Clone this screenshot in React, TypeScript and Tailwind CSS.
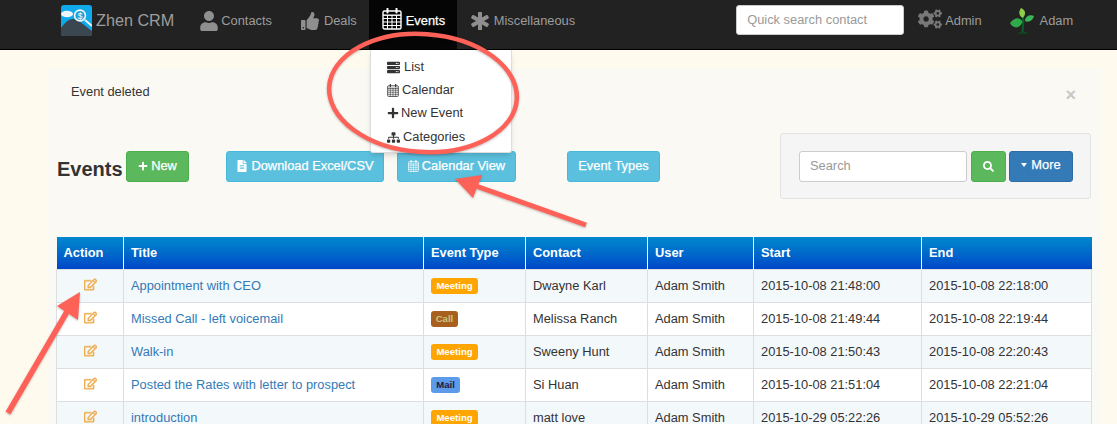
import React from "react";
import { FaUser, FaThumbsUp, FaAsterisk, FaCogs, FaServer, FaPlus, FaSitemap, FaRegEdit, FaSearch, FaFileAlt } from "react-icons/fa";

function Cal({ className, stroke = "currentColor" }: { className?: string; stroke?: string }) {
  return (
    <svg viewBox="0 0 20 22" className={className} fill="none" stroke={stroke}>
      <rect x="1" y="3" width="18" height="18" rx="1.5" strokeWidth="1.4" />
      <path d="M1 7.2H19" strokeWidth="1.4" />
      <path d="M1 10.5H19M1 14H19M1 17.5H19M5.5 7V21M10 7V21M14.5 7V21" strokeWidth="1" />
      <path d="M5.5 0.8V4.5M14.5 0.8V4.5" strokeWidth="2" strokeLinecap="round" />
    </svg>
  );
}

function Logo() {
  return (
    <svg viewBox="0 0 31 31" className="w-[31px] h-[31px] shrink-0">
      <rect width="31" height="31" rx="3" fill="#10a9ec" />
      <path d="M0 28V23C3 19 6 15 11 14C16 13 22 19 31 26V28A3 3 0 0 1 28 31H3A3 3 0 0 1 0 28Z" fill="#3a4650" />
      <ellipse cx="6" cy="9" rx="6" ry="3.2" fill="#eef6fa" />
      <circle cx="19" cy="10.5" r="6.2" fill="#f2f9fc" />
      <circle cx="19" cy="10.5" r="4.6" fill="#1c9fd8" />
      <text x="19" y="13.5" fontSize="8.5" fill="#fff" textAnchor="middle" fontFamily="Liberation Sans">$</text>
      <path d="M24 15L31 21" stroke="#eef6fa" strokeWidth="2" />
    </svg>
  );
}

function Plant() {
  return (
    <svg viewBox="0 0 24 26" className="w-[24px] h-[26px] shrink-0">
      <path d="M13 8C13.5 13 13 19 12.5 24" stroke="#0b5a2a" strokeWidth="2.2" fill="none" />
      <path d="M8.5 25H17" stroke="#0b4a22" strokeWidth="1.6" />
      <path d="M12.5 10C8 7 9 3 11 0C15 1.5 17 6 12.5 10Z" fill="#8ccf4a" />
      <path d="M12.5 14C10 9 5 9 0 15C3 21 10 21 12.5 14Z" fill="#2faa4a" />
      <path d="M15 13C15 9 19 6 24 8C23 12 19 15 15 13Z" fill="#3cb558" />
    </svg>
  );
}

const rows = [
  ["Appointment with CEO", "Meeting", "Dwayne Karl", "2015-10-08 21:48:00", "2015-10-08 22:18:00"],
  ["Missed Call - left voicemail", "Call", "Melissa Ranch", "2015-10-08 21:49:44", "2015-10-08 22:19:44"],
  ["Walk-in", "Meeting", "Sweeny Hunt", "2015-10-08 21:50:43", "2015-10-08 22:20:43"],
  ["Posted the Rates with letter to prospect", "Mail", "Si Huan", "2015-10-08 21:51:04", "2015-10-08 22:21:04"],
  ["introduction", "Meeting", "matt love", "2015-10-29 05:22:26", "2015-10-29 05:52:26"],
];

function Badge({ t }: { t: string }) {
  const c =
    t === "Meeting"
      ? "bg-[#ffa500] text-white w-[47px]"
      : t === "Call"
        ? "bg-[#a8601f] text-[#c9c77f] w-[27px]"
        : "bg-[#5b9bea] text-[#2a1838] w-[29px]";
  return (
    <span className={`inline-flex items-center justify-center h-[16px] rounded-[3px] text-[9.6px] font-bold align-middle ${c}`}>{t}</span>
  );
}

const th = "border-r border-white px-[7px] text-left font-bold text-[12.85px] text-white last:border-r-0";
const td = "border border-[#dcdfe2] px-[7px] text-[12.85px] text-[#333]";
const btnText = "text-white [-webkit-text-stroke:0.25px_white]";

export default function App() {
  return (
    <div className="relative w-[1117px] h-[424px] overflow-hidden bg-[#fffaee] flex flex-col font-['Liberation_Sans',sans-serif] text-[#333]">
      <nav className="h-[50px] shrink-0 bg-[#222] border-b border-black flex items-center pl-[61px] pb-[8px] text-[12.85px] text-[#9d9d9d]">
        <Logo />
        <span className="ml-[4px] text-[16.2px]">Zhen CRM</span>
        <FaUser className="ml-[25px] text-[20px] text-[#8f8f8f]" />
        <span className="ml-[2px]">Contacts</span>
        <FaThumbsUp className="ml-[29px] text-[18px] text-[#8f8f8f]" />
        <span className="ml-[5px]">Deals</span>
        <div className="ml-[12px] w-[88px] h-[49px] self-start bg-[#050505] text-white flex items-center pl-[13px] pb-[8px] [-webkit-text-stroke:0.25px_white]">
          <Cal className="w-[20px] h-[22px] mb-[3px]" />
          <span className="ml-[4px]">Events</span>
        </div>
        <FaAsterisk className="ml-[14px] text-[18px] text-[#8f8f8f] stroke-[30px]" />
        <span className="ml-[5px]">Miscellaneous</span>
        <div className="ml-[161px] mb-[1px] w-[168px] h-[30px] bg-white border border-[#ccc] rounded-[3px] flex items-center px-[10px] text-[12.85px] text-[#999]">
          Quick search contact
        </div>
        <FaCogs className="ml-[14px] mb-[3px] text-[24px] text-[#777]" />
        <span className="ml-[3px]">Admin</span>
        <div className="ml-[28px]"><Plant /></div>
        <span className="ml-[6px]">Adam</span>
      </nav>

      <main className="flex-1 mt-[18px] ml-[47px] mr-[16px] bg-[#fbf9f4] px-[9px]">
        <div className="h-[65px] relative pl-[15px] pt-[17px] text-[12.85px] leading-[14px] flex justify-between">
          <span>Event deleted</span>
          <span className="mt-[1px] pr-[16px] text-[18px] font-bold leading-[18px] text-[#c8c8c8]">×</span>
        </div>
        <div className="h-[104px] flex items-start text-[12.85px]">
          <div className="mt-[18px] flex items-start">
            <h1 className="w-[70px] mt-[6px] pl-[1px] text-[20px] leading-[24px] font-bold">Events</h1>
            <button className={`w-[63px] h-[31px] pb-[2px] rounded-[3px] bg-[#5cb85c] border border-[#4cae4c] flex items-center justify-center gap-[3px] ${btnText}`}>
              <FaPlus className="text-[10px]" />New
            </button>
            <button className={`ml-[37px] w-[158px] h-[31px] pb-[2px] rounded-[3px] bg-[#5bc0de] border border-[#46b8da] flex items-center justify-center gap-[3px] ${btnText}`}>
              <FaFileAlt className="text-[12px]" />Download Excel/CSV
            </button>
            <button className={`ml-[13px] w-[119px] h-[31px] pb-[2px] rounded-[3px] bg-[#5bc0de] border border-[#46b8da] flex items-center justify-center gap-[3px] ${btnText}`}>
              <Cal className="w-[11px] h-[12px]" />Calendar View
            </button>
            <button className={`ml-[51px] w-[93px] h-[31px] pb-[2px] rounded-[3px] bg-[#5bc0de] border border-[#46b8da] flex items-center justify-center ${btnText}`}>
              Event Types
            </button>
          </div>
          <div className="ml-auto mr-[1px] w-[311px] h-[66px] rounded-[3px] bg-[#f5f5f5] border border-[#e3e3e3] flex items-center pl-[18px]">
            <div className="w-[168px] h-[31px] bg-white border border-[#ccc] rounded-[3px] flex items-center px-[10px] text-[#999]">Search</div>
            <button className="ml-[4px] w-[35px] h-[31px] rounded-[3px] bg-[#5cb85c] border border-[#4cae4c] text-white flex items-center justify-center">
              <FaSearch className="text-[11px]" />
            </button>
            <button className={`ml-[3px] w-[64px] h-[31px] pb-[2px] rounded-[3px] bg-[#337ab7] border border-[#2e6da4] flex items-center justify-center gap-[4px] ${btnText}`}>
              <span className="w-0 h-0 border-x-[3.5px] border-x-transparent border-t-[4px] border-t-white" />More
            </button>
          </div>
        </div>
        <table className="table-fixed w-[1035px] border-collapse">
          <colgroup>
            <col className="w-[67px]" />
            <col className="w-[300px]" />
            <col className="w-[102px]" />
            <col className="w-[122px]" />
            <col className="w-[106px]" />
            <col className="w-[168px]" />
            <col className="w-[170px]" />
          </colgroup>
          <thead>
            <tr className="h-[32px] bg-gradient-to-b from-[#0088cc] to-[#0046c8]">
              {["Action", "Title", "Event Type", "Contact", "User", "Start", "End"].map((h) => (
                <th key={h} className={th}>{h}</th>
              ))}
            </tr>
          </thead>
          <tbody>
            {rows.map((r, i) => (
              <tr key={i} className={`h-[33px] ${i % 2 === 0 ? "bg-[#f3f8fb]" : "bg-white"}`}>
                <td className={td}>
                  <div className="flex justify-center mb-[3px]"><FaRegEdit className="text-[13px] text-[#f0ad4e] stroke-[20px]" /></div>
                </td>
                <td className={`${td} text-[#337ab7]`}>{r[0]}</td>
                <td className={td}><Badge t={r[1]} /></td>
                <td className={td}>{r[2]}</td>
                <td className={td}>Adam Smith</td>
                <td className={td}>{r[3]}</td>
                <td className={td}>{r[4]}</td>
              </tr>
            ))}
          </tbody>
        </table>
      </main>

      <div className="absolute left-[370px] top-[50px] w-[142px] h-[103px] bg-white border border-[#ddd] border-t-0 rounded-b-[3px] shadow-md text-[12.85px] text-[#333]">
        <div className="absolute left-[16px] top-[9px] flex items-center h-[16px] gap-[4px]"><FaServer className="text-[13px]" />List</div>
        <div className="absolute left-[16px] top-[32px] flex items-center h-[16px] gap-[3px]"><Cal className="w-[12px] h-[13px]" />Calendar</div>
        <div className="absolute left-[16px] top-[55px] flex items-center h-[16px] gap-[2px]"><FaPlus className="text-[12px]" />New Event</div>
        <div className="absolute left-[16px] top-[79px] flex items-center h-[16px] gap-[3px]"><FaSitemap className="text-[13px]" />Categories</div>
      </div>

      <svg className="absolute inset-0 w-[1117px] h-[424px] pointer-events-none drop-shadow-[0_1px_1px_rgba(0,0,0,0.25)]" viewBox="0 0 1117 424">
        <ellipse cx="423" cy="93" rx="94" ry="59" fill="none" stroke="#fe6157" strokeWidth="4.5" transform="rotate(4 423 93)" />
        <path d="M586 225L476 186" stroke="#fe6157" strokeWidth="5" />
        <path d="M455 179L482 175L473 198Z" fill="#fe6157" />
        <path d="M8 413L68 310" stroke="#fe6157" strokeWidth="5.5" />
        <path d="M80 292L57 306L78 320Z" fill="#fe6157" />
      </svg>
    </div>
  );
}
